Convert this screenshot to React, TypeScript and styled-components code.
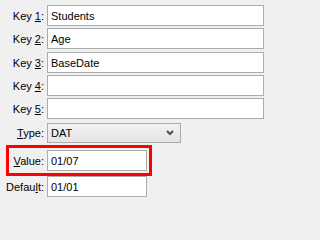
import React from "react";
import styled, { createGlobalStyle } from "styled-components";

const GlobalStyle = createGlobalStyle`
  html, body {
    margin: 0;
    padding: 0;
    background: #f0f0f0;
  }
  body {
    font-family: "Liberation Sans", Arial, sans-serif;
    font-size: 11px;
    color: #000;
  }
`;

const Panel = styled.div`
  width: 268px;
  height: 201px;
  padding: 5px 4px 0 0;
  box-sizing: border-box;
  display: flex;
  flex-direction: column;
  overflow: hidden;
`;

const Row = styled.div<{ $mt?: number }>`
  position: relative;
  display: flex;
  align-items: center;
  gap: 3px;
  margin-top: ${(p) => p.$mt ?? 0}px;
`;

const Label = styled.label`
  width: 44px;
  flex: none;
  text-align: right;
  white-space: nowrap;
  color: #000;
`;

const Key = styled.u`
  text-decoration: underline;
  text-underline-offset: 1px;
`;

const TextBox = styled.div<{ $w?: number }>`
  box-sizing: border-box;
  height: 21px;
  width: ${(p) => (p.$w ? `${p.$w}px` : "auto")};
  flex: ${(p) => (p.$w ? "none" : "1")};
  background: #fff;
  border: 1px solid #acacac;
  padding: 0 3px;
  display: flex;
  align-items: center;
  white-space: nowrap;
`;

const Combo = styled.div`
  box-sizing: border-box;
  width: 134px;
  height: 20px;
  background: linear-gradient(180deg, #f2f2f2 0%, #e5e5e5 100%);
  border: 1px solid #acacac;
  padding: 0 6px 0 3px;
  display: flex;
  align-items: center;
  justify-content: space-between;
`;

const Chevron = styled.svg`
  width: 8px;
  height: 6px;
  flex: none;
`;

const Highlight = styled.div`
  position: absolute;
  left: 6px;
  top: -5px;
  width: 146px;
  height: 31px;
  box-sizing: border-box;
  border: 3px solid #ff0000;
  pointer-events: none;
`;

const keys = [
  { n: "1", value: "Students", mt: 0 },
  { n: "2", value: "Age", mt: 2 },
  { n: "3", value: "BaseDate", mt: 3 },
  { n: "4", value: "", mt: 2 },
  { n: "5", value: "", mt: 2 },
];

const App: React.FC = () => {
  return (
    <>
      <GlobalStyle />
      <Panel>
        {keys.map((k) => (
          <Row key={k.n} $mt={k.mt}>
            <Label>
              Key <Key>{k.n}</Key>:
            </Label>
            <TextBox>{k.value}</TextBox>
          </Row>
        ))}
        <Row $mt={4}>
          <Label>
            <Key>T</Key>ype:
          </Label>
          <Combo>
            <span>DAT</span>
            <Chevron viewBox="0 0 8 6">
              <polyline
                points="1,1 4,4 7,1"
                fill="none"
                stroke="#4d4d4d"
                strokeWidth="2"
              />
            </Chevron>
          </Combo>
        </Row>
        <Row $mt={7}>
          <Label>
            <Key>V</Key>alue:
          </Label>
          <TextBox $w={100}>01/07</TextBox>
          <Highlight />
        </Row>
        <Row $mt={5}>
          <Label>
            Defau<Key>l</Key>t:
          </Label>
          <TextBox $w={100}>01/01</TextBox>
        </Row>
      </Panel>
    </>
  );
};

export default App;
